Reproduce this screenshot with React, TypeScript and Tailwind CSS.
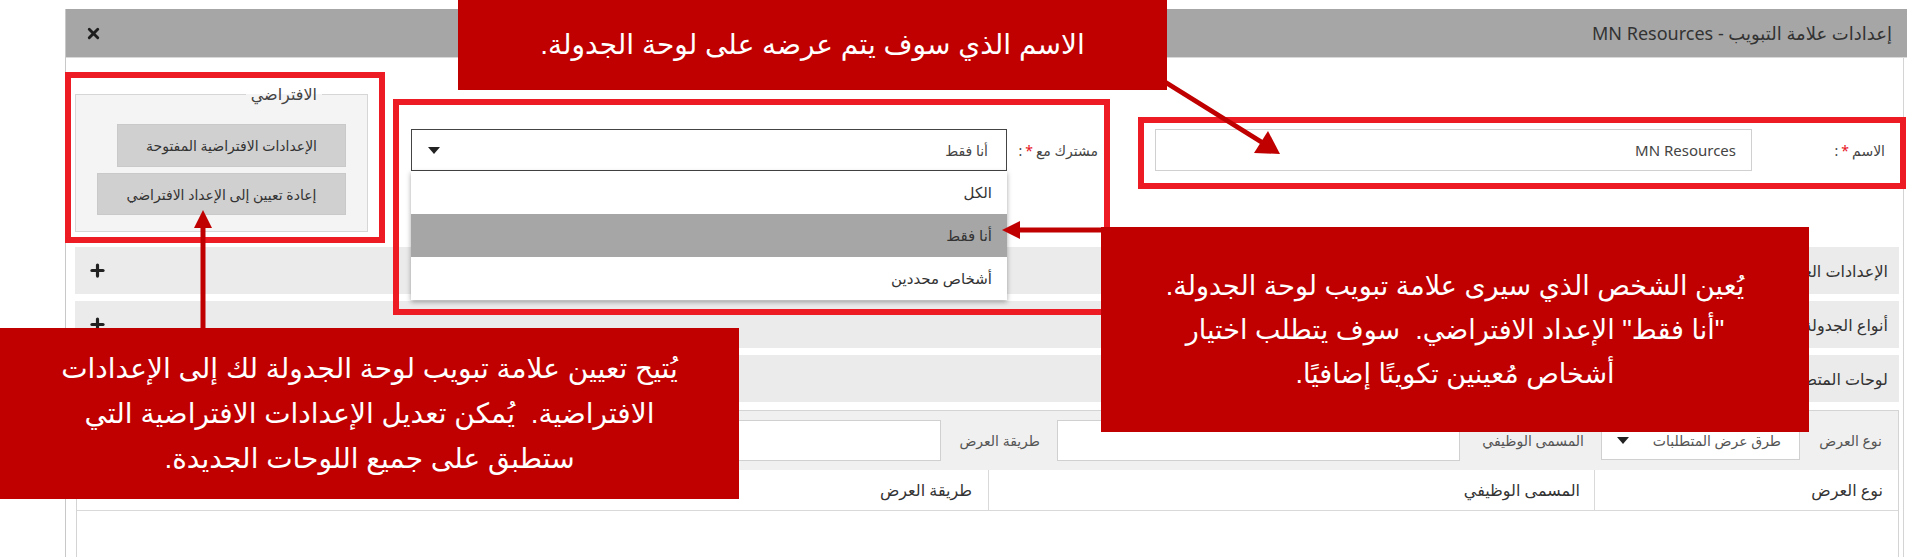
import { X, Plus } from "lucide-react";

const accordionRows = ["الإعدادات العامة", "أنواع الجدولة", "لوحات المتطلبات"];

const shareOptions = ["الكل", "أنا فقط", "أشخاص محددين"];

const Arrows: React.FC = () => (
  <svg
    className="absolute left-0 top-0 pointer-events-none"
    width="1907"
    height="557"
    viewBox="0 0 1907 557"
  >
    {/* name callout arrow */}
    <line x1="1165" y1="82" x2="1263" y2="143" stroke="#c00000" strokeWidth="5" />
    <polygon points="1280,154 1254,153 1268,131" fill="#c00000" />
    {/* share-with callout arrow */}
    <line x1="1101" y1="230" x2="1016" y2="230" stroke="#c00000" strokeWidth="5" />
    <polygon points="1002,230 1020,221 1020,239" fill="#c00000" />
    {/* default callout arrow */}
    <line x1="203" y1="328" x2="203" y2="224" stroke="#c00000" strokeWidth="5" />
    <polygon points="203,210 194,228 212,228" fill="#c00000" />
  </svg>
);

const App: React.FC = () => {
  return (
    <div className="relative w-[1907px] h-[557px] overflow-hidden bg-white text-[#333] font-['Noto_Sans','DejaVu_Sans',sans-serif]">
      <div dir="rtl" className="ml-[65px] mt-[9px] flex flex-col border-l border-[#c8c8c8]">
        {/* title bar */}
        <div className="h-[49px] bg-[#a6a6a6] border-b border-[#d9d9d9] flex items-center justify-between pr-[15px] pl-[19px]">
          <span className="text-[18px]">إعدادات علامة التبويب - MN Resources</span>
          <X size={17} strokeWidth={4} className="text-[#1e1e1e]" />
        </div>

        <div className="mr-[3px] border-r border-[#d4d4d4] pr-[4px] pl-[9px] flex flex-col h-[500px]">
          {/* form */}
          <div className="flex items-start pt-[25px] pb-[15px]">
            <div className="w-[147px] mt-[46px] h-[42px] flex items-center pr-[14px] text-[14px] text-[#444]">
              الاسم <span className="text-[#e81123] mx-[3px]">*</span>:
            </div>
            <div className="w-[597px] mt-[46px] h-[42px] border border-[#d0d0d0] flex items-center pr-[15px] text-[15px] text-[#444]">
              MN Resources
            </div>
            <div className="w-[148px] mt-[46px] h-[42px] flex items-center pr-[57px] text-[14px] text-[#444]">
              مشترك مع <span className="text-[#e81123] mx-[3px]">*</span>:
            </div>
            <div className="w-[596px] mt-[46px] h-[42px] border border-[#444] flex items-center justify-between pr-[18px] pl-[16px] text-[14px] text-[#444]">
              <span>أنا فقط</span>
              <span className="w-0 h-0 border-l-[6px] border-r-[6px] border-t-[7px] border-l-transparent border-r-transparent border-t-[#222]" />
            </div>
            <fieldset className="mr-auto w-[293px] border border-[#d6d6d6] bg-[#f4f4f4] pt-[19px] pr-[21px] pb-[16px] flex flex-col items-start gap-[6px]">
              <legend className="mr-[24px] px-[5px] text-[16px] leading-[22px] text-[#444]">الافتراضي</legend>
              <button className="w-[229px] h-[43px] bg-[#d0d0d0] border border-[#c9c9c9] text-[14px] text-[#333]">
                الإعدادات الافتراضية المفتوحة
              </button>
              <button className="w-[249px] h-[42px] bg-[#d0d0d0] border border-[#c9c9c9] text-[14px] text-[#333]">
                إعادة تعيين إلى الإعداد الافتراضي
              </button>
            </fieldset>
          </div>

          {/* accordion */}
          <div className="flex flex-col gap-[7px]">
            {accordionRows.map((row) => (
              <div key={row} className="h-[47px] bg-[#ebebeb] flex items-center justify-between pr-[11px] pl-[13px]">
                <span className="text-[16px] text-[#333]">{row}</span>
                <Plus size={19} strokeWidth={4} className="text-[#222]" />
              </div>
            ))}
          </div>

          {/* filters + grid */}
          <div className="mt-[8px] ml-[1px] border border-[#d4d4d4] flex-1 flex flex-col">
            <div className="h-[59px] bg-[#f0f0f0] flex items-center text-[14px] text-[#555]">
              <div className="w-[98px] pr-[16px]">نوع العرض</div>
              <div className="w-[199px] h-[38px] bg-white border border-[#d0d0d0] flex items-center justify-between pr-[18px] pl-[15px]">
                <span>طرق عرض المتطلبات</span>
                <span className="w-0 h-0 border-l-[6px] border-r-[6px] border-t-[7px] border-l-transparent border-r-transparent border-t-[#222]" />
              </div>
              <div className="w-[141px] pr-[17px]">المسمى الوظيفي</div>
              <div className="w-[403px] h-[41px] bg-white border border-[#d0d0d0]" />
              <div className="w-[116px] pr-[17px]">طريقة العرض</div>
              <div className="w-[403px] h-[41px] bg-white border border-[#d0d0d0]" />
            </div>
            <div className="h-[41px] flex border-b border-[#d9d9d9] text-[16px] text-[#333]">
              <div className="w-[304px] border-l border-[#d9d9d9] flex items-center pr-[15px]">نوع العرض</div>
              <div className="w-[606px] border-l border-[#d9d9d9] flex items-center pr-[14px]">المسمى الوظيفي</div>
              <div className="flex-1 flex items-center pr-[16px]">طريقة العرض</div>
            </div>
            <div className="flex-1 bg-white" />
          </div>
        </div>
      </div>

      {/* open share-with list */}
      <div
        dir="rtl"
        className="absolute left-[411px] top-[171px] w-[596px] bg-white shadow-[0_2px_5px_rgba(0,0,0,0.35)] text-[15px] text-[#333]"
      >
        {shareOptions.map((opt) => (
          <div
            key={opt}
            className={
              opt === "أنا فقط"
                ? "h-[43px] flex items-center pr-[15px] bg-[#a6a6a6]"
                : "h-[43px] flex items-center pr-[15px]"
            }
          >
            {opt}
          </div>
        ))}
      </div>

      {/* highlight frames */}
      <div className="absolute left-[65px] top-[72px] w-[320px] h-[171px] border-[6px] border-[#ed1c24]" />
      <div className="absolute left-[393px] top-[99px] w-[717px] h-[216px] border-[6px] border-[#ed1c24]" />
      <div className="absolute left-[1138px] top-[117px] w-[768px] h-[72px] border-[6px] border-[#ed1c24]" />

      {/* callouts */}
      <div
        dir="rtl"
        className="absolute left-[458px] top-0 w-[709px] h-[90px] bg-[#c00000] text-white flex items-center justify-center text-[28px] leading-[44px] font-['Liberation_Sans','DejaVu_Sans',sans-serif]"
      >
        الاسم الذي سوف يتم عرضه على لوحة الجدولة.
      </div>
      <div
        dir="rtl"
        className="absolute left-[1101px] top-[227px] w-[708px] h-[205px] bg-[#c00000] text-white flex flex-col items-center justify-center text-center whitespace-pre text-[27px] leading-[44px] font-['Liberation_Sans','DejaVu_Sans',sans-serif]"
      >
        <div>يُعين الشخص الذي سيرى علامة تبويب لوحة الجدولة.</div>
        <div>{'"أنا فقط" الإعداد الافتراضي.  سوف يتطلب اختيار'}</div>
        <div>أشخاص مُعينين تكوينًا إضافيًا.</div>
      </div>
      <div
        dir="rtl"
        className="absolute left-0 top-[328px] w-[739px] h-[171px] bg-[#c00000] text-white flex flex-col items-center justify-center text-center whitespace-pre text-[28px] leading-[45px] font-['Liberation_Sans','DejaVu_Sans',sans-serif]"
      >
        <div>يُتيح تعيين علامة تبويب لوحة الجدولة لك إلى الإعدادات</div>
        <div>الافتراضية.  يُمكن تعديل الإعدادات الافتراضية التي</div>
        <div>ستطبق على جميع اللوحات الجديدة.</div>
      </div>

      <Arrows />
    </div>
  );
};

export default App;
